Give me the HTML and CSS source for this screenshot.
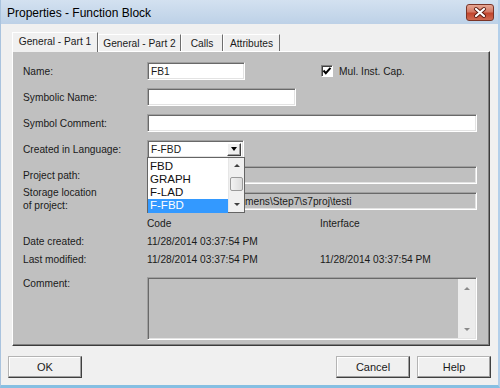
FILE: index.html
```html
<!DOCTYPE html>
<html>
<head>
<meta charset="utf-8">
<link rel="stylesheet" href="styles.css">
</head>
<body>
<div class="window">
  <div class="titlebar">
    <span class="title">Properties - Function Block</span>
    <div class="close">
      <svg width="28" height="17" viewBox="0 0 28 17">
        <path d="M10 5 L18 12 M18 5 L10 12" stroke="#5a1a10" stroke-width="4" stroke-linecap="round"/>
        <path d="M10 5 L18 12 M18 5 L10 12" stroke="#ffffff" stroke-width="2.2" stroke-linecap="round"/>
      </svg>
    </div>
  </div>
  <div class="content">
    <div class="tabs">
      <div class="tab active t1">General - Part 1</div>
      <div class="tab t2">General - Part 2</div>
      <div class="tab t3">Calls</div>
      <div class="tab t4">Attributes</div>
    </div>
    <div class="panel">
      <div class="row">
        <div class="label">Name:</div>
        <div class="field w-name">FB1</div>
        <div class="check">
          <svg width="12" height="12" viewBox="0 0 12 12"><path d="M2.5 5.5 L4.8 8.2 L9.5 2.8" fill="none" stroke="#000" stroke-width="2"/></svg>
        </div>
        <span class="check-label">Mul. Inst. Cap.</span>
      </div>
      <div class="row">
        <div class="label">Symbolic Name:</div>
        <div class="field w-sym"></div>
      </div>
      <div class="row">
        <div class="label">Symbol Comment:</div>
        <div class="field w-full"></div>
      </div>
      <div class="row lang-row">
        <div class="label">Created in Language:</div>
        <div class="select">
          <span class="select-text">F-FBD</span>
          <div class="select-btn"><span class="tri-down"></span></div>
          <div class="droplist">
            <div class="items">
              <div class="item">FBD</div>
              <div class="item">GRAPH</div>
              <div class="item">F-LAD</div>
              <div class="item selected">F-FBD</div>
            </div>
            <div class="vscroll">
              <div class="sb-arrow"><span class="tri-up-s"></span></div>
              <div class="sb-track"><div class="sb-thumb"></div></div>
              <div class="sb-arrow"><span class="tri-down-s"></span></div>
            </div>
          </div>
        </div>
      </div>
      <div class="row">
        <div class="label">Project path:</div>
        <div class="field disabled w-full"></div>
      </div>
      <div class="row storage-row">
        <div class="label two">Storage location<br>of project:</div>
        <div class="field disabled w-full">C:\Program Files\Siemens\Step7\s7proj\testi</div>
      </div>
      <div class="trow">
        <div class="label"></div>
        <div class="code">Code</div>
        <div class="iface">Interface</div>
      </div>
      <div class="trow">
        <div class="label">Date created:</div>
        <div class="code">11/28/2014 03:37:54 PM</div>
        <div class="iface"></div>
      </div>
      <div class="trow">
        <div class="label">Last modified:</div>
        <div class="code">11/28/2014 03:37:54 PM</div>
        <div class="iface">11/28/2014 03:37:54 PM</div>
      </div>
      <div class="comment-row">
        <div class="label">Comment:</div>
        <div class="textarea">
          <div class="ta-scroll">
            <span class="tri-up-s light"></span>
            <span class="tri-down-s light"></span>
          </div>
        </div>
      </div>
    </div>
  </div>
  <div class="footer">
    <div class="btn">OK</div>
    <div class="spacer"></div>
    <div class="btn">Cancel</div>
    <div class="btn">Help</div>
  </div>
</div>
</body>
</html>
```
FILE: styles.css
```css
* { box-sizing: border-box; }
body {
  margin: 0;
  font-family: "Liberation Sans", Arial, sans-serif;
  font-size: 10.2px;
  color: #1a1a1a;
}
.window {
  width: 500px;
  height: 388px;
  display: flex;
  flex-direction: column;
  background: #f0f0f0;
  border-left: 1px solid #a9c3de;
  border-right: 2px solid #b3cfea;
  border-bottom: 3px solid #86bfe2;
}
.titlebar {
  height: 24px;
  flex: none;
  display: flex;
  justify-content: space-between;
  align-items: flex-start;
  padding: 0 4px 0 6px;
  background: linear-gradient(#d3e1f0, #bdd1e7);
}
.title {
  font-size: 12px;
  color: #000;
  margin-top: 6px;
}
.close {
  margin-top: 4px;
  width: 28px;
  height: 17px;
  border: 1px solid #7a3427;
  border-radius: 3px;
  background: linear-gradient(#e6a694 0%, #d47a66 45%, #c2452d 55%, #cf6a52 100%);
  display: flex;
}
.close svg { display: block; margin: -1px; }

.content {
  padding: 8px 0 0 11px;
}
.tabs {
  display: flex;
  align-items: flex-end;
  height: 19px;
}
.tab {
  height: 17px;
  border-top: 1px solid #fff;
  border-left: 1px solid #fff;
  border-right: 1px solid #6d6d6d;
  display: flex;
  align-items: center;
  justify-content: center;
  background: #f0f0f0;
  white-space: nowrap;
}
.tab.active {
  height: 20px;
  margin-bottom: -1px;
  position: relative;
  z-index: 1;
  padding-bottom: 2px;
}
.t1 { width: 86px; }
.t2 { width: 83px; }
.t3 { width: 42px; }
.t4 { width: 57px; }

.panel {
  position: relative;
  width: 478px;
  height: 295px;
  background: #c0c0c0;
  border: 1px solid;
  border-color: #fff #3c3c3c #3c3c3c #fff;
  box-shadow: inset -1px -1px 0 #808080;
  padding: 10px 10px 0 10px;
}
.row {
  display: flex;
  align-items: center;
  height: 18px;
  margin-bottom: 8px;
}
.storage-row { margin-bottom: 4px; }
.label {
  width: 124px;
  flex: none;
  white-space: nowrap;
}
.label.two { line-height: 13px; margin-top: -5px; }
.field {
  height: 18px;
  background: #fff;
  border: 1px solid;
  border-color: #a0a0a0 #fff #fff #a0a0a0;
  box-shadow: inset 1px 1px 0 #696969, inset -1px -1px 0 #e3e3e3;
  padding: 0 3px;
  display: flex;
  align-items: center;
  white-space: nowrap;
  overflow: hidden;
  flex: none;
}
.field.disabled { background: #c0c0c0; }
.w-name { width: 98px; }
.w-sym { width: 149px; }
.w-full { width: 330px; }

.check {
  width: 12px;
  height: 12px;
  margin-left: 76px;
  background: #fff;
  border: 1px solid;
  border-color: #808080 #fff #fff #808080;
  box-shadow: inset 1px 1px 0 #404040;
  flex: none;
}
.check svg { display: block; margin: -1px 0 0 -1px; }
.check-label { margin-left: 6px; }

.select {
  position: relative;
  width: 97px;
  height: 18px;
  background: #fff;
  border: 1px solid;
  border-color: #a0a0a0 #fff #fff #a0a0a0;
  box-shadow: inset 1px 1px 0 #696969, inset -1px -1px 0 #e3e3e3;
  display: flex;
  align-items: center;
  padding: 0 2px 0 3px;
}
.select-text { flex: 1; }
.select-btn {
  width: 14px;
  height: 13px;
  background: #f0f0f0;
  border: 1px solid;
  border-color: #fff #404040 #404040 #fff;
  box-shadow: inset -1px -1px 0 #a0a0a0;
  display: flex;
  align-items: center;
  justify-content: center;
}
.tri-down {
  width: 0; height: 0;
  border-left: 3.5px solid transparent;
  border-right: 3.5px solid transparent;
  border-top: 4px solid #000;
}
.droplist {
  position: absolute;
  left: -1px;
  top: 16px;
  width: 98px;
  height: 56px;
  background: #fff;
  border: 1px solid #646464;
  display: flex;
  z-index: 5;
}
.items {
  flex: 1;
  padding-top: 2px;
}
.item {
  height: 13px;
  line-height: 13px;
  font-size: 11.5px;
  padding-left: 2px;
  color: #111;
}
.item.selected {
  background: #3399ff;
  color: #fff;
  height: 14px;
}
.vscroll {
  width: 16px;
  display: flex;
  flex-direction: column;
  background: #f0f0f0;
  border-left: 1px solid #e6e6e6;
}
.sb-arrow {
  height: 15px;
  display: flex;
  align-items: center;
  justify-content: center;
}
.sb-track {
  flex: 1;
  padding-top: 4px;
}
.sb-thumb {
  height: 14px;
  margin: 0 1px;
  background: linear-gradient(90deg, #f2f2f2, #dcdcdc);
  border: 1px solid #9a9a9a;
  border-radius: 2px;
}
.tri-up-s, .tri-down-s {
  width: 0; height: 0;
  border-left: 3px solid transparent;
  border-right: 3px solid transparent;
}
.tri-up-s { border-bottom: 3px solid #404040; }
.tri-down-s { border-top: 3px solid #404040; }
.tri-up-s.light { border-bottom-color: #8a8a8a; }
.tri-down-s.light { border-top-color: #8a8a8a; }

.trow {
  display: flex;
  align-items: center;
  height: 18px;
}
.code { width: 173px; flex: none; }
.iface { flex: 1; }

.comment-row {
  display: flex;
  align-items: flex-start;
  margin-top: 9px;
}
.comment-row .label { margin-top: 0; line-height: 13px; }
.textarea {
  width: 330px;
  height: 63px;
  background: #c0c0c0;
  border: 1px solid;
  border-color: #a0a0a0 #fff #fff #a0a0a0;
  box-shadow: inset 1px 1px 0 #696969, inset -1px -1px 0 #e3e3e3;
  display: flex;
  justify-content: flex-end;
  padding: 1px 1px 1px 1px;
}
.ta-scroll {
  width: 17px;
  background: #ececec;
  display: flex;
  flex-direction: column;
  justify-content: space-between;
  align-items: center;
  padding: 8px 0 7px;
}

.footer {
  display: flex;
  padding: 10px 7px 0 7px;
  gap: 7px;
}
.spacer { flex: 1; }
.btn {
  width: 74px;
  height: 22px;
  display: flex;
  align-items: center;
  justify-content: center;
  background: #f0f0f0;
  border: 1px solid;
  border-color: #b4b4b4 #404040 #404040 #b4b4b4;
  box-shadow: inset -1px -1px 0 #a0a0a0, inset 1px 1px 0 #fff;
  font-size: 11px;
}
```
